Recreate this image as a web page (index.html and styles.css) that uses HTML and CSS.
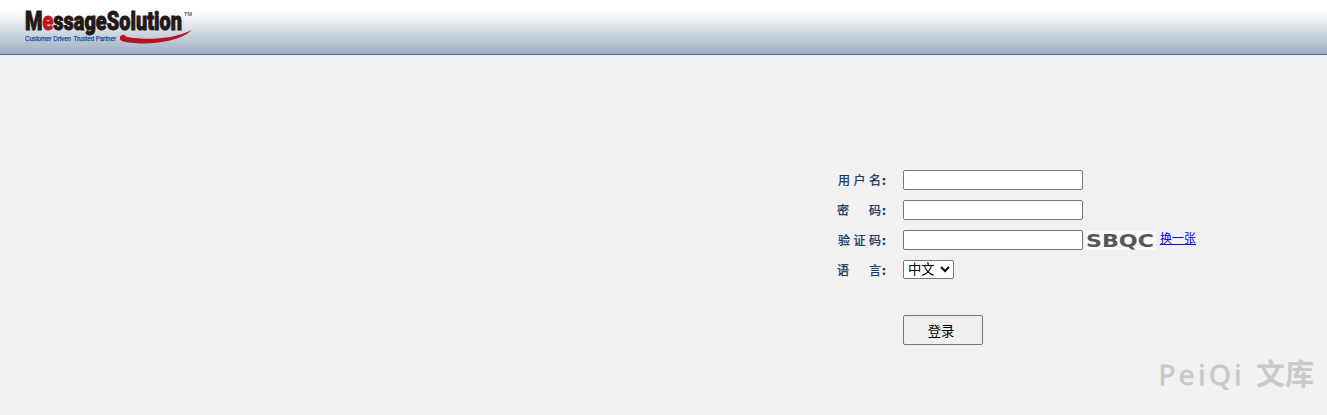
FILE: index.html
```html
<!DOCTYPE html>
<html lang="zh-CN">
<head>
<meta charset="utf-8">
<title>MessageSolution</title>
<link rel="stylesheet" href="styles.css">
</head>
<body>
<header class="header">
  <svg class="logo" width="172" height="38" viewBox="0 0 172 38" role="img" aria-label="MessageSolution">
    <text class="logo-name" x="1" y="22" textLength="157" lengthAdjust="spacingAndGlyphs">M<tspan class="logo-accent">e</tspan>ssageSolution</text>
    <text class="logo-tm" x="160" y="8" textLength="8" lengthAdjust="spacingAndGlyphs">TM</text>
    <text class="logo-tag" x="1" y="33" textLength="46" lengthAdjust="spacingAndGlyphs">Customer Driven</text>
    <text class="logo-tag" x="49.5" y="33" textLength="42.500" lengthAdjust="spacingAndGlyphs">Trusted Partner</text>
    <path class="logo-swoosh" d="M98.500 26.900C95 27.500 95 32 98.500 33.200C112 37 151 37.500 168 22C147 32 122 32 104 29.300C101 28.700 101 26.500 98.500 26.900Z"/>
  </svg>
</header>
<main class="main">
  <form class="login">
    <label class="label" for="user"><span>用</span><span>户</span><span>名<b class="colon">:</b></span></label>
    <div class="field"><input class="input" id="user" type="text"></div>
    <label class="label label-wide" for="pass"><span>密</span><span>码<b class="colon">:</b></span></label>
    <div class="field"><input class="input" id="pass" type="password"></div>
    <label class="label" for="code"><span>验</span><span>证</span><span>码<b class="colon">:</b></span></label>
    <div class="field">
      <input class="input" id="code" type="text">
      <svg class="captcha" width="70" height="19" viewBox="0 0 70 19"><text class="captcha-text" x="0" y="15.500" textLength="68" lengthAdjust="spacingAndGlyphs">SBQC</text></svg>
      <a class="refresh" href="#">换一张</a>
    </div>
    <label class="label label-wide" for="lang"><span>语</span><span>言<b class="colon">:</b></span></label>
    <div class="field"><select class="select" id="lang"><option>中文</option></select></div>
    <button class="submit" type="button">登录</button>
  </form>
  <div class="watermark"><span class="mark-latin">PeiQi</span><span class="mark-cjk">文库</span></div>
</main>
</body>
</html>
```
FILE: styles.css
```css
* { box-sizing: border-box; }
body {
  margin: 0;
  height: 415px;
  overflow: hidden;
  background: #f1f1f1;
  font: 12px "Liberation Sans", "Noto Sans CJK SC", sans-serif;
}
.header {
  height: 55px;
  padding: 8px 0 0 24px;
  border-bottom: 1px solid #4a6f9c;
  background: linear-gradient(#fff 0, #fff 10px, #dde3e9 27px, #9cadc1 54px);
}
.logo { display: block; overflow: visible; }
.logo-name { font: 900 26px Roboto, sans-serif; fill: #231815; stroke: #231815; stroke-width: .9px; }
.logo-accent { fill: #c4121f; stroke: #c4121f; }
.logo-tm { font: 6px "Liberation Sans", sans-serif; fill: #231815; }
.logo-tag { font: 7px "Liberation Sans", sans-serif; fill: #174a91; stroke: #174a91; stroke-width: .25px; }
.logo-swoosh { fill: #b5121d; }
.main { height: 360px; padding: 115px 0 0 837px; }
.login {
  display: grid;
  grid-template-columns: 50px 1fr;
  grid-template-rows: repeat(4, 30px);
  column-gap: 16px;
}
.label {
  display: flex;
  justify-content: space-between;
  height: 20px;
  padding-left: 1px;
  color: #0c2f5c;
  font: 12px/20px "Noto Sans CJK SC", sans-serif;
  -webkit-text-stroke: .25px #0c2f5c;
}
.label-wide { padding-left: 0; }
.colon { display: inline-block; width: 6px; padding-left: 1px; }
.field { display: flex; align-items: flex-start; height: 20px; }
.input {
  width: 180px;
  height: 20px;
  border: 1px solid #767676;
  border-radius: 2px;
  background: #fff;
  padding: 1px 2px;
}
.captcha { display: block; margin: 1px 0 0 3px; background: #f9faf9; }
.captcha-text { font: bold 17px "DejaVu Sans", sans-serif; fill: #555856; }
.refresh { margin-left: 4px; line-height: 18px; color: #00e; }
.select {
  width: 51px;
  height: 19px;
  padding: 0;
  border: 1px solid #767676;
  border-radius: 2px;
  background-color: #fff;
  color: #000;
  font: 13.333px "Liberation Sans", "Noto Sans CJK SC", sans-serif;
}
.submit {
  grid-column: 2;
  width: 80px;
  height: 30px;
  margin-top: 25px;
  padding: 0 4px 0 0;
  border: 1px solid #767676;
  border-radius: 2px;
  background: #efefef;
  color: #000;
  font: 13.333px "Noto Sans CJK SC", sans-serif;
}
.watermark {
  display: flex;
  align-items: baseline;
  justify-content: flex-end;
  gap: 11px;
  margin-top: 7px;
  padding-right: 13px;
  color: #c9c9c9;
  line-height: 40px;
}
.mark-latin { font: 28px/40px "Noto Sans", sans-serif; letter-spacing: 3.500px; -webkit-text-stroke: .8px #c9c9c9; }
.mark-cjk { font: bold 29px/40px "Noto Sans CJK SC", sans-serif; }
```
